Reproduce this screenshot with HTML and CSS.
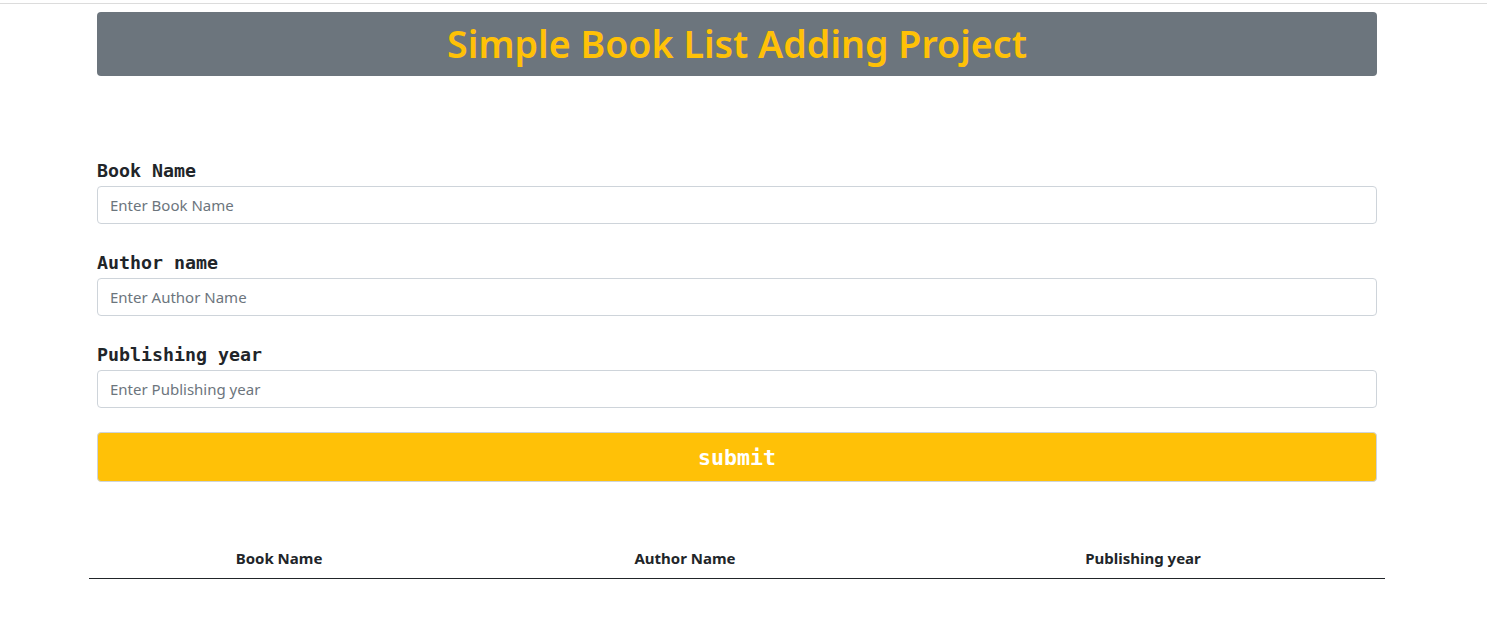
FILE: index.html
```html
<!DOCTYPE html>
<html lang="en">
<head>
<meta charset="utf-8">
<title>Simple Book List Adding Project</title>
<link rel="stylesheet" href="styles.css">
</head>
<body>
<div class="topline"></div>
<div class="container">
  <div class="inner">
    <header class="banner">
      <h1 class="title">Simple Book List Adding Project</h1>
    </header>
    <form class="book-form">
      <div class="field">
        <label class="label" for="book">Book Name</label>
        <input class="input" id="book" type="text" placeholder="Enter Book Name">
      </div>
      <div class="field">
        <label class="label" for="author">Author name</label>
        <input class="input" id="author" type="text" placeholder="Enter Author Name">
      </div>
      <div class="field">
        <label class="label" for="year">Publishing year</label>
        <input class="input" id="year" type="text" placeholder="Enter Publishing year">
      </div>
      <button class="submit" type="button">submit</button>
    </form>
  </div>
  <table class="book-table">
    <thead>
      <tr>
        <th class="col1">Book Name</th>
        <th class="col2">Author Name</th>
        <th class="col3">Publishing year</th>
      </tr>
    </thead>
    <tbody></tbody>
  </table>
</div>
</body>
</html>
```
FILE: styles.css
```css
* { box-sizing: border-box; }
html, body { margin: 0; padding: 0; background: #fff; }
body {
  font-family: "Noto Sans", "Open Sans", sans-serif;
  color: #212529;
  padding-top: 3px;
  padding-right: 13px;
}
.topline {
  height: 1px;
  background: #dcdcdc;
  margin-right: -13px;
}
.container {
  width: 1320px;
  margin: 0 auto;
  padding: 0 12px;
}
.inner {
  padding: 8px 8px 0;
}
.banner {
  background: #6c757d;
  border-radius: 4px;
  height: 64px;
  display: flex;
  align-items: center;
  justify-content: center;
}
.title {
  margin: 0;
  color: #ffc107;
  font-family: "Noto Sans", sans-serif;
  font-weight: 600;
  font-size: 37.6px;
  line-height: 1.2;
}
.book-form {
  padding-top: 79px;
  display: flex;
  flex-direction: column;
}
.field {
  display: flex;
  flex-direction: column;
  margin-bottom: 23px;
}
.field:last-of-type { margin-bottom: 24px; }
.label {
  font-family: "DejaVu Sans Mono", "Liberation Mono", monospace;
  font-weight: bold;
  font-size: 18.3px;
  line-height: 27px;
  padding-top: 2px;
  margin-bottom: 2px;
  color: #212529;
}
.input {
  height: 38px;
  border: 1px solid #ced4da;
  border-radius: 4px;
  padding: 0 12px;
  font-family: "Noto Sans", sans-serif;
  font-size: 15px;
  color: #212529;
}
.input::placeholder { color: #6c757d; opacity: 1; }
.submit {
  height: 50px;
  background: #ffc107;
  border: 1px solid #ced4da;
  border-radius: 4px;
  color: #fff;
  font-family: "DejaVu Sans Mono", "Liberation Mono", monospace;
  font-weight: bold;
  font-size: 21.6px;
}
.book-table {
  margin-top: 56px;
  width: 1296px;
  border-collapse: collapse;
}
.book-table th {
  padding: 8px;
  line-height: 24px;
  font-size: 15px;
  font-weight: bold;
  text-align: center;
  border-bottom: 1px solid #212529;
}
.col1 { width: 380px; }
.col2 { width: 432px; }
.col3 { width: 484px; }
```
